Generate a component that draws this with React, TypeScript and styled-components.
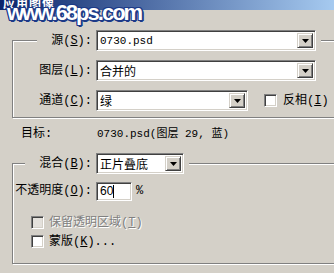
import styled, { createGlobalStyle } from "styled-components"

const GlobalStyle = createGlobalStyle`
  html, body {
    margin: 0;
    padding: 0;
    background: #d4d0c8;
  }
`

const Window = styled.div`
  position: relative;
  width: 334px;
  height: 273px;
  overflow: hidden;
  background: #d4d0c8;
  font-family: "Liberation Mono", "Noto Sans CJK SC", monospace;
  font-size: 12px;
  color: #000;
`

const TitleBar = styled.div`
  height: 10px;
  display: flex;
  align-items: flex-end;
  overflow: hidden;
  padding-left: 3px;
  background: linear-gradient(to right, #0a246a, #a6caf0);
`

const TitleText = styled.span`
  font-family: "Noto Sans CJK SC", sans-serif;
  font-weight: 700;
  font-size: 12px;
  line-height: 14px;
  color: #fff;
  letter-spacing: 1px;
`

const Watermark = styled.div`
  position: absolute;
  left: 7px;
  top: 1px;
  font-family: "Liberation Sans", Arial, sans-serif;
  font-size: 22px;
  line-height: 24px;
  font-weight: 700;
  letter-spacing: -2px;
  color: #fff;
  text-shadow:
    1px 0 0 #1c3a88, -1px 0 0 #1c3a88, 0 1px 0 #1c3a88, 0 -1px 0 #1c3a88,
    1px 1px 0 #1c3a88, -1px -1px 0 #1c3a88, 1px -1px 0 #1c3a88, -1px 1px 0 #1c3a88,
    2px 1px 0 #1c3a88, 1px 2px 0 #1c3a88;
`

const Content = styled.div`
  width: 360px;
  padding-left: 12px;
  padding-top: 20px;
  box-sizing: border-box;
`

const Group = styled.fieldset<{ $pt: number; $pb: number; $mt?: number }>`
  margin: ${p => p.$mt ?? 0}px 0 0 0;
  padding: ${p => p.$pt}px 0 ${p => p.$pb}px 0;
  border: 1px solid #808080;
  box-shadow: inset 1px 1px 0 #fff, 1px 1px 0 #fff;
  min-inline-size: 0;
  display: flex;
  flex-direction: column;
  gap: 9px;
`

const Legend = styled.legend<{ $ml: number }>`
  margin-left: ${p => p.$ml}px;
  padding: 0 5px 0 0;
  background: #d4d0c8;
  display: flex;
  align-items: center;
  gap: 4px;
`

const Row = styled.div<{ $pl?: number; $h?: number }>`
  display: flex;
  align-items: center;
  gap: 4px;
  height: ${p => p.$h ?? 21}px;
  padding-left: ${p => p.$pl ?? 0}px;
`

const Label = styled.span<{ $w: number; $left?: boolean }>`
  width: ${p => p.$w}px;
  text-align: ${p => p.$left ? "left" : "right"};
  white-space: nowrap;
  line-height: 14px;
`

const Key = styled.span`
  text-decoration: underline;
`

const Combo = styled.div<{ $w: number }>`
  width: ${p => p.$w}px;
  height: 21px;
  box-sizing: border-box;
  background: #fff;
  border: 1px solid;
  border-color: #808080 #fff #fff #808080;
  box-shadow: inset 1px 1px 0 #404040, inset -1px -1px 0 #d4d0c8;
  display: flex;
  align-items: center;
  padding: 2px;
`

const ComboText = styled.span<{ $mono?: boolean }>`
  flex: 1;
  padding-left: 1px;
  font-family: ${p => p.$mono ? `"Liberation Mono", monospace` : `"Noto Sans CJK SC", sans-serif`};
  font-size: ${p => p.$mono ? 11 : 12}px;
  line-height: 14px;
  white-space: nowrap;
`

const ComboButton = styled.div`
  width: 16px;
  height: 15px;
  box-sizing: border-box;
  background: #d4d0c8;
  border: 1px solid;
  border-color: #d4d0c8 #404040 #404040 #d4d0c8;
  box-shadow: inset 1px 1px 0 #fff, inset -1px -1px 0 #808080;
  display: flex;
  align-items: center;
  justify-content: center;
`

const Input = styled.div`
  width: 36px;
  height: 19px;
  box-sizing: border-box;
  background: #fff;
  border: 1px solid;
  border-color: #808080 #fff #fff #808080;
  box-shadow: inset 1px 1px 0 #404040, inset -1px -1px 0 #d4d0c8;
  display: flex;
  align-items: center;
  padding-left: 3px;
  font-family: "Liberation Sans", Arial, sans-serif;
  font-size: 12px;
`

const Caret = styled.span`
  width: 1px;
  height: 13px;
  background: #000;
`

const Box = styled.span<{ $disabled?: boolean }>`
  width: 13px;
  height: 13px;
  box-sizing: border-box;
  flex: none;
  background: ${p => p.$disabled ? "#e4e1dc" : "#fff"};
  border: 1px solid;
  border-color: #808080 #fff #fff #808080;
  box-shadow: inset 1px 1px 0 #404040, inset -1px -1px 0 #d4d0c8;
`

const CheckLabel = styled.span<{ $disabled?: boolean }>`
  line-height: 14px;
  white-space: nowrap;
  color: ${p => p.$disabled ? "#808080" : "#000"};
  text-shadow: ${p => p.$disabled ? "1px 1px 0 #fff" : "none"};
`

const Check = styled.label<{ $pl?: number; $gap?: number }>`
  display: flex;
  align-items: center;
  gap: ${p => p.$gap ?? 5}px;
  height: 19px;
  padding-left: ${p => p.$pl ?? 0}px;
`

const CheckList = styled.div`
  margin-top: 3px;
`

const TargetRow = styled.div`
  display: flex;
  align-items: center;
  height: 20px;
  margin-top: 6px;
  padding-left: 9px;
`

const TargetValue = styled.span`
  font-size: 11px;
  line-height: 14px;
  white-space: nowrap;
`

const Arrow = () => (
  <svg width="7" height="4" viewBox="0 0 7 4">
    <path d="M0 0h7L3.5 4z" fill="#000" />
  </svg>
)

type SelectProps = { width: number; value: string; mono?: boolean }
const Select = ({ width, value, mono }: SelectProps) => (
  <Combo $w={width}>
    <ComboText $mono={mono}>{value}</ComboText>
    <ComboButton><Arrow /></ComboButton>
  </Combo>
)

export default function App() {
  return (
    <Window>
      <GlobalStyle />
      <TitleBar><TitleText>应用图像</TitleText></TitleBar>
      <Watermark>www.68ps.com</Watermark>
      <Content>
        <Group $pt={9} $pb={6}>
          <Legend $ml={24}>
            <Label $w={55}>源(<Key>S</Key>):</Label>
            <Select width={220} value="0730.psd" mono />
          </Legend>
          <Row $pl={24}>
            <Label $w={55}>图层(<Key>L</Key>):</Label>
            <Select width={220} value="合并的" />
          </Row>
          <Row $pl={24}>
            <Label $w={55}>通道(<Key>C</Key>):</Label>
            <Select width={152} value="绿" />
            <Check $pl={12} $gap={6}>
              <Box />
              <CheckLabel>反相(<Key>I</Key>)</CheckLabel>
            </Check>
          </Row>
        </Group>
        <TargetRow>
          <Label $w={76} $left>目标:</Label>
          <TargetValue>0730.psd(图层 29, 蓝)</TargetValue>
        </TargetRow>
        <Group $pt={7} $pb={12} $mt={9}>
          <Legend $ml={12}>
            <Label $w={67}>混合(<Key>B</Key>):</Label>
            <Select width={88} value="正片叠底" />
          </Legend>
          <Row $h={20}>
            <Label $w={79}>不透明度(<Key>O</Key>):</Label>
            <Input>60<Caret /></Input>
            <span>%</span>
          </Row>
          <CheckList>
            <Check $pl={18}>
              <Box $disabled />
              <CheckLabel $disabled>保留透明区域(<Key>T</Key>)</CheckLabel>
            </Check>
            <Check $pl={18}>
              <Box />
              <CheckLabel>蒙版(<Key>K</Key>)...</CheckLabel>
            </Check>
          </CheckList>
        </Group>
      </Content>
    </Window>
  )
}
